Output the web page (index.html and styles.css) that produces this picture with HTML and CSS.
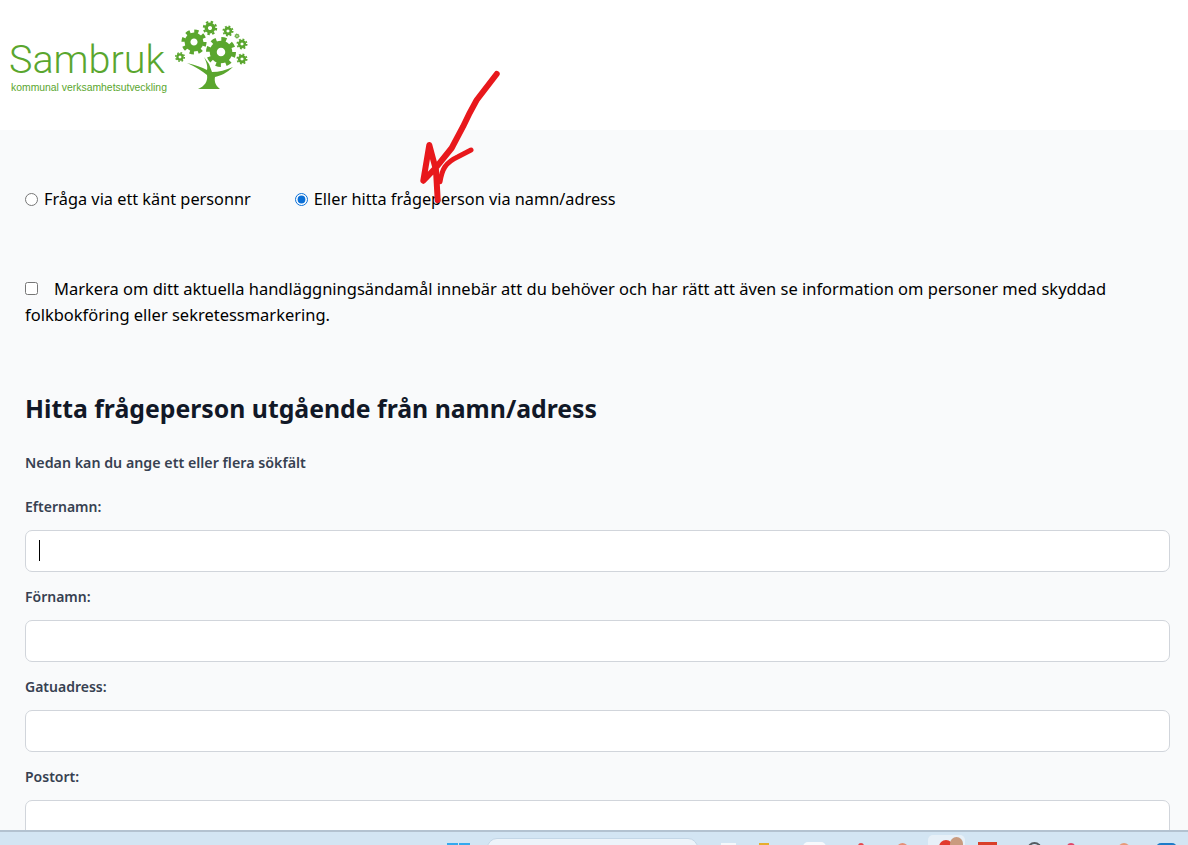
FILE: index.html
```html
<!DOCTYPE html>
<html lang="sv">
<head>
<meta charset="utf-8">
<title>Sambruk</title>
<link rel="stylesheet" href="styles.css">
</head>
<body>
<div class="screen">
  <header class="header">
    <div class="logo">
      <div class="logo-text">
        <span class="logo-name">Sambruk</span>
        <span class="logo-sub">kommunal verksamhetsutveckling</span>
      </div>
      <svg class="logo-tree" width="78" height="72" viewBox="0 0 78 72">
        <defs>
          <g id="gear">
            <circle r="6.2" fill="none" stroke="#5aa62e" stroke-width="5.6"/>
            <circle r="10.2" fill="none" stroke="#5aa62e" stroke-width="3.6" stroke-dasharray="4 4"/>
          </g>
        </defs>
        <use href="#gear" transform="translate(22 22) scale(1.05)"/>
        <use href="#gear" transform="translate(49 32) scale(1.25)"/>
        <use href="#gear" transform="translate(38 8) scale(.6)"/>
        <use href="#gear" transform="translate(56 11) scale(.46)"/>
        <use href="#gear" transform="translate(65 16) scale(.22)"/>
        <use href="#gear" transform="translate(70 24) scale(.46)"/>
        <use href="#gear" transform="translate(70 39) scale(.46)"/>
        <use href="#gear" transform="translate(8 37) scale(.42)"/>
        <path d="M26 69 C33 66 36 61 35 55 C30 51 24 47 15 43 C23 45 30 47 35 50 C36 46 34 41 32 37 L37 44 L40 52 C47 52 54 50 61 47 C55 53 48 56 43 57 C42 62 44 66 48 69 Z" fill="#5aa62e"/>
      </svg>
    </div>
  </header>

  <main class="main">
    <div class="radio-row">
      <label class="radio-label"><input type="radio" name="mode" class="radio"><span>Fråga via ett känt personnr</span></label>
      <label class="radio-label"><input type="radio" name="mode" class="radio" checked><span>Eller hitta frågeperson via namn/adress</span></label>
    </div>

    <label class="consent">
      <input type="checkbox" class="check">Markera om ditt aktuella handläggningsändamål innebär att du behöver och har rätt att även se information om personer med skyddad folkbokföring eller sekretessmarkering.
    </label>

    <h1 class="title">Hitta frågeperson utgående från namn/adress</h1>
    <p class="hint">Nedan kan du ange ett eller flera sökfält</p>

    <div class="fields">
      <div class="field">
        <label class="field-label">Efternamn:</label>
        <div class="input"><span class="caret"></span></div>
      </div>
      <div class="field">
        <label class="field-label">Förnamn:</label>
        <div class="input"></div>
      </div>
      <div class="field">
        <label class="field-label">Gatuadress:</label>
        <div class="input"></div>
      </div>
      <div class="field">
        <label class="field-label">Postort:</label>
        <div class="input"></div>
      </div>
    </div>
  </main>

  <footer class="taskbar">
    <span class="win"><i></i><i></i></span>
    <span class="search"></span>
    <span class="tb tb-white"></span>
    <span class="tb tb-yellow"></span>
    <span class="tb tb-white2"></span>
    <span class="tb tb-red"></span>
    <span class="tb tb-orange"></span>
    <span class="tb-active"><span class="tb-redblob"></span><span class="tb-face"></span></span>
    <span class="tb tb-cal"></span>
    <span class="tb tb-ring"></span>
    <span class="tb tb-pink"></span>
    <span class="tb tb-salmon"></span>
    <span class="tb tb-blue"></span>
  </footer>

  <svg class="arrow" width="90" height="140" viewBox="0 0 90 140">
    <path d="M76.7 4 L56.7 30 C51 40 47 48 43 56.7 L31.7 78 L16.7 96.7 L3.3 110.7 L9.3 75 L16 100 L17.7 130" fill="none" stroke="#e8181c" stroke-width="6" stroke-linecap="round" stroke-linejoin="round"/>
    <path d="M20 111.7 C21 106 22 101 25 96.7 C29 91 33 89 38 86.7 L51 80" fill="none" stroke="#e8181c" stroke-width="5" stroke-linecap="round"/>
  </svg>
</div>
</body>
</html>
```

FILE: styles.css
```css
* { box-sizing: border-box; }
html, body { margin: 0; height: 100%; overflow: hidden; }
body { font-family: "Noto Sans", "Open Sans", sans-serif; background: #f9fafb; color: #000; }
.screen { position: relative; display: flex; flex-direction: column; height: 845px; overflow: hidden; }

.header { flex: none; height: 130px; background: #fff; padding: 20px 0 0 9px; }
.logo { display: flex; align-items: flex-start; }
.logo-text { display: flex; flex-direction: column; width: 158px; margin-top: 18px; white-space: nowrap; }
.logo-name { font-family: Roboto, "Liberation Sans", sans-serif; font-weight: 300; font-size: 39.5px; line-height: 44px; color: #5aa62e; }
.logo-sub { font-family: "Liberation Sans", sans-serif; font-size: 10.4px; line-height: 12px; color: #5aa62e; margin-left: 2px; }
.logo-tree { margin-left: 5px; }

.main { flex: 1; min-height: 0; overflow: hidden; padding: 57px 18px 0 25px; }
.radio-row { display: flex; gap: 44px; height: 24px; align-items: center; }
.radio-label { display: flex; align-items: center; gap: 6px; font-size: 16.3px; }
.radio { width: 13px; height: 13px; margin: 1px 0 0; accent-color: #0b6fd6; }

.consent { display: block; margin-top: 65px; font-size: 16.48px; line-height: 26px; }
.check { width: 13px; height: 13px; margin: 0 16px 0 0; }

.title { margin: 64px 0 0; font-size: 24.8px; line-height: 32px; font-weight: 700; color: #111827; }
.hint { margin: 29px 0 0; font-size: 14.25px; line-height: 20px; font-weight: 600; color: #374151; }

.fields { display: flex; flex-direction: column; margin-top: 24px; }
.field { height: 90px; display: flex; flex-direction: column; }
.field-label { font-size: 14px; line-height: 20px; font-weight: 600; color: #374151; margin-bottom: 13px; }
.input { height: 42px; background: #fff; border: 1px solid #d1d5db; border-radius: 7px; padding: 9px 13px; }
.caret { display: block; width: 1px; height: 21px; background: #000; }

.taskbar { flex: none; height: 15px; background: #d3e5f3; border-top: 2px solid #b3c2d0; display: flex; align-items: flex-start; padding-left: 447px; overflow: hidden; }
.win { display: flex; gap: 1px; margin-top: 11px; }
.win i { width: 11px; height: 12px; background: #35a9ee; }
.search { width: 211px; height: 20px; margin: 6px 0 0 17px; background: #edf4fa; border: 1px solid #c3d6e6; border-radius: 10px; }
.tb { display: block; height: 14px; margin-top: 11px; }
.tb-white { background: #f5f8fb; width: 15px; margin-left: 23px; }
.tb-yellow { background: #e6ad2e; width: 10px; margin-left: 23px; }
.tb-white2 { background: #f7f9fc; width: 23px; border-radius: 5px 5px 0 0; margin-left: 34px; margin-top: 10px; }
.tb-red { background: #e5484d; width: 6px; border-radius: 5px 5px 0 0; margin-left: 32px; }
.tb-orange { background: #e58f76; width: 11px; border-radius: 6px 6px 0 0; margin-left: 33px; }
.tb-active { display: block; position: relative; width: 37px; height: 14px; margin: 3px 0 0 20px; background: #e7f0f8; border-radius: 5px 5px 0 0; }
.tb-redblob { position: absolute; left: 11px; top: 5px; width: 14px; height: 9px; background: #e23b2e; border-radius: 9px 9px 0 0; }
.tb-face { position: absolute; left: 22px; top: 2px; width: 13px; height: 12px; background: #c99b7f; border-radius: 7px 7px 0 0; }
.tb-cal { width: 19px; background: #f8fafc; border-top: 3px solid #d9402a; margin: 10px 0 0 13px; }
.tb-ring { width: 15px; border: 2px solid #555d62; border-bottom: 0; border-radius: 8px 8px 0 0; margin: 10px 0 0 30px; }
.tb-pink { width: 8px; background: #e0476a; border-radius: 5px 5px 0 0; margin-left: 25px; }
.tb-salmon { width: 12px; background: #e89a78; border-radius: 6px 6px 0 0; margin-left: 43px; }
.tb-blue { width: 21px; background: #1e7cc8; border-radius: 5px 5px 0 0; margin-left: 26px; }

.arrow { position: absolute; left: 420px; top: 70px; }
```
